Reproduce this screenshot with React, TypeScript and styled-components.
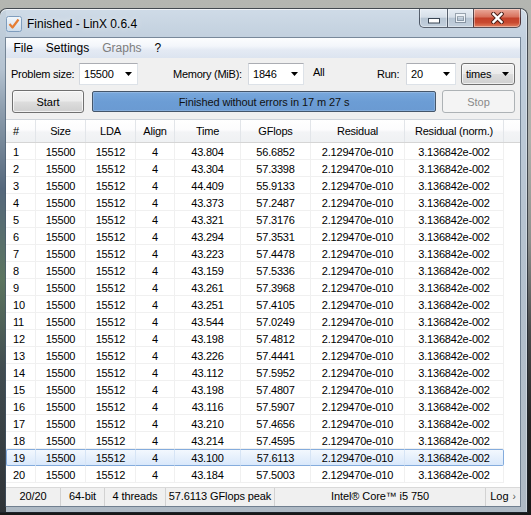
import React from "react";
import styled, { createGlobalStyle, css } from "styled-components";

const FONT = `"Liberation Sans", Arial, sans-serif`;

const Global = createGlobalStyle`
  html, body { margin: 0; padding: 0; }
  body {
    width: 531px;
    height: 515px;
    overflow: hidden;
    background: linear-gradient(180deg, #b4b6b1 0px, #aeb0ab 140px, #8d8f8c 240px, #4a4b4b 330px, #262626 420px, #181818 515px);
    font-family: ${FONT};
  }
`;

const Desktop = styled.div`
  height: 515px;
  padding-top: 9px;
  box-sizing: border-box;
`;

const Window = styled.div`
  width: 527px;
  height: 503px;
  box-sizing: border-box;
  padding: 0 7px 6px 6px;
  display: flex;
  flex-direction: column;
  border-radius: 7px 7px 0 0;
  box-shadow: 0 0 0 1px rgba(30, 38, 48, 0.75), inset 0 1px 0 rgba(255, 255, 255, 0.7),
    inset -1px 0 0 rgba(255, 255, 255, 0.35);
  background:
    linear-gradient(180deg, #c6d3df 0px, #b4c2d0 60px, #8e9eae 100px, #55687c 180px, #5c755f 270px, #414c50 360px, #2f3337 503px) left top / 6px 100% no-repeat,
    linear-gradient(180deg, #cfdbe7 0px, #c2d0de 29px, #b7c4d1 200px, #aeb9c4 503px);
`;

const TitleBar = styled.div`
  height: 29px;
  margin: 0 -7px 0 -6px;
  display: flex;
  align-items: flex-start;
`;

const TitleGroup = styled.div`
  height: 29px;
  padding-left: 6px;
  display: flex;
  align-items: center;
  gap: 5px;
  flex: 1;
`;

const TitleText = styled.span`
  font-family: ${FONT};
  font-size: 12px;
  color: #000;
  text-shadow: 0 0 6px rgba(255, 255, 255, 0.9);
  padding-top: 1px;
`;

const Controls = styled.div`
  display: flex;
  height: 19px;
  margin-right: 6px;
`;

const glass = css`
  background: linear-gradient(180deg, #e6edf4 0%, #d6dfe8 45%, #b7c5d3 52%, #c3d0dd 100%);
`;
const red = css`
  background: linear-gradient(180deg, #eaab9c 0%, #d9745f 42%, #c4412a 52%, #c94a30 75%, #e2805f 100%);
`;

const CtrlButton = styled.div<{ $kind: "min" | "max" | "close" }>`
  height: 19px;
  box-sizing: border-box;
  display: flex;
  align-items: center;
  justify-content: center;
  border: 1px solid rgba(35, 45, 60, 0.72);
  border-top: none;
  box-shadow: inset 0 0 0 1px rgba(255, 255, 255, 0.4);
  width: ${(p) => (p.$kind === "close" ? 48 : p.$kind === "min" ? 29 : 27)}px;
  margin-left: ${(p) => (p.$kind === "min" ? 0 : -1)}px;
  border-radius: ${(p) => (p.$kind === "min" ? "0 0 0 5px" : p.$kind === "close" ? "0 0 5px 0" : "0")};
  ${(p) => (p.$kind === "close" ? red : glass)}
`;

const MinGlyph = styled.svg`
  margin-top: 5px;
`;

const Client = styled.div`
  flex: 1;
  display: flex;
  flex-direction: column;
  background: #f0f0f0;
  box-shadow: 0 0 0 1px rgba(70, 88, 108, 0.6);
  overflow: hidden;
  font-family: ${FONT};
  font-size: 11px;
  color: #000;
`;

const MenuBar = styled.div`
  height: 20px;
  display: flex;
  align-items: center;
  padding-left: 1px;
  background: linear-gradient(180deg, #fcfdfe 0%, #f3f6fb 40%, #e4eaf4 60%, #dce4f0 100%);
`;

const MenuItem = styled.span<{ $disabled?: boolean }>`
  font-size: 12px;
  padding: 0 6.5px;
  color: ${(p) => (p.$disabled ? "#7d7d7d" : "#000")};
`;

const Toolbar = styled.div`
  display: flex;
  flex-direction: column;
  gap: 5px;
  padding: 5px 5px 6px 5px;
`;

const ToolRow = styled.div<{ $pl?: number }>`
  display: flex;
  align-items: center;
  padding-left: ${(p) => p.$pl ?? 0}px;
`;

const Label = styled.span<{ $w: number; $ml?: number; $raise?: number }>`
  width: ${(p) => p.$w}px;
  margin-left: ${(p) => p.$ml ?? 0}px;
  padding-bottom: ${(p) => p.$raise ?? 0}px;
  letter-spacing: -0.25px;
  white-space: nowrap;
`;

const Combo = styled.div<{ $w: number; $ml?: number }>`
  width: ${(p) => p.$w}px;
  margin-left: ${(p) => p.$ml ?? 0}px;
  height: 22px;
  box-sizing: border-box;
  display: flex;
  align-items: center;
  padding: 0 5px 0 4px;
  background: #fff;
  border: 1px solid #dde2e8;
  border-top-color: #abadb3;
  border-left-color: #d5d9df;
`;

const ButtonCombo = styled(Combo)`
  height: 22px;
  border: 1px solid #707070;
  border-radius: 3px;
  background: linear-gradient(180deg, #f2f2f2 0%, #ebebeb 48%, #dddddd 52%, #cfcfcf 100%);
  box-shadow: inset 0 0 0 1px rgba(255, 255, 255, 0.65);
`;

const ComboText = styled.span`
  flex: 1;
  letter-spacing: -0.2px;
`;

const Button = styled.button<{ $w: number; $disabled?: boolean }>`
  width: ${(p) => p.$w}px;
  height: 23px;
  box-sizing: border-box;
  margin: 0;
  padding: 0;
  font-family: ${FONT};
  font-size: 11px;
  border-radius: 3px;
  ${(p) =>
    p.$disabled
      ? css`
          border: 1px solid #adb2b5;
          background: #f4f4f4;
          color: #8a8a8a;
        `
      : css`
          border: 1px solid #707070;
          background: linear-gradient(180deg, #f2f2f2 0%, #ebebeb 48%, #dddddd 52%, #cfcfcf 100%);
          box-shadow: inset 0 0 0 1px rgba(255, 255, 255, 0.7);
          color: #000;
        `}
`;

const Progress = styled.div`
  flex: 1;
  height: 21px;
  margin: 0 6px 0 8px;
  box-sizing: border-box;
  border: 1px solid #45566a;
  border-radius: 2px;
  background: linear-gradient(180deg, #79a8dc 0%, #6c9dd5 50%, #6a9ad2 100%);
  box-shadow: inset 0 0 0 1px rgba(255, 255, 255, 0.18);
  display: flex;
  align-items: center;
  justify-content: center;
  color: #111;
  letter-spacing: -0.1px;
`;

const Table = styled.div`
  flex: 1;
  background: #fff;
  border-top: 1px solid #cfd4da;
  display: flex;
  flex-direction: column;
  overflow: hidden;
`;

const HeaderRow = styled.div`
  display: grid;
  grid-template-columns: 30px 50px 50px 39px 66px 70px 94px 99px 16px;
  height: 23px;
  box-sizing: border-box;
  border-bottom: 1px solid #d5d5d5;
  background: linear-gradient(180deg, #ffffff 0%, #fcfcfd 45%, #f3f4f6 55%, #eff1f3 100%);
`;

const HeaderCell = styled.div<{ $left?: boolean; $last?: boolean }>`
  display: flex;
  align-items: center;
  justify-content: ${(p) => (p.$left ? "flex-start" : "center")};
  padding-left: ${(p) => (p.$left ? 7 : 0)}px;
  border-right: ${(p) => (p.$last ? "none" : "1px solid #e2e5e9")};
  letter-spacing: -0.2px;
`;

const DataRow = styled.div`
  display: grid;
  grid-template-columns: 30px 50px 50px 39px 66px 70px 94px 99px;
  height: 17px;
`;

const Cell = styled.div<{ $left?: boolean; $sel?: boolean; $first?: boolean; $last?: boolean }>`
  display: flex;
  align-items: center;
  box-sizing: border-box;
  padding-top: 2px;
  justify-content: ${(p) => (p.$left ? "flex-start" : "center")};
  padding-left: ${(p) => (p.$left ? 7 : 0)}px;
  border-right: 1px solid #f0f0f0;
  border-bottom: 1px solid #f0f0f0;
  letter-spacing: -0.2px;
  white-space: nowrap;
  ${(p) =>
    p.$sel &&
    css`
      background: linear-gradient(180deg, #f3f8fe 0%, #e6f0fc 50%, #d9e8fb 100%);
      border-top: 1px solid #84acdd;
      border-bottom: 1px solid #84acdd;
      border-right: 1px solid ${p.$last ? "#84acdd" : "#d6e4f5"};
      padding-top: 1px;
      ${p.$first &&
      css`
        border-left: 1px solid #84acdd;
        border-radius: 2px 0 0 2px;
        padding-left: 6px;
      `}
      ${p.$last &&
      css`
        border-radius: 0 2px 2px 0;
      `}
    `}
`;

const StatusBar = styled.div`
  height: 19px;
  box-sizing: border-box;
  display: flex;
  background: #f0f0f0;
  border-top: 1px solid #d9d9d9;
`;

const StatusCell = styled.div<{ $w?: number; $last?: boolean }>`
  width: ${(p) => (p.$w ? `${p.$w}px` : "auto")};
  flex: ${(p) => (p.$w ? "none" : 1)};
  display: flex;
  align-items: center;
  justify-content: center;
  padding-bottom: 2px;
  box-sizing: border-box;
  border-right: ${(p) => (p.$last ? "none" : "1px solid #d2d2d2")};
  white-space: nowrap;
  letter-spacing: -0.1px;
`;

const Chevron = styled.span`
  color: #555;
  margin-left: 4px;
  font-size: 10px;
`;

const Arrow = () => (
  <svg width="7" height="4" viewBox="0 0 7 4">
    <polygon points="0,0 7,0 3.5,4" fill="#000" />
  </svg>
);

const AppIcon = () => (
  <svg width="16" height="16" viewBox="0 0 16 16">
    <defs>
      <linearGradient id="ig" x1="0" y1="0" x2="0" y2="1">
        <stop offset="0" stopColor="#f4f8fc" />
        <stop offset="1" stopColor="#cddcea" />
      </linearGradient>
    </defs>
    <rect x="0.5" y="0.5" width="15" height="15" rx="2" fill="url(#ig)" stroke="#7f9dbd" />
    <path d="M3.5 8 L6.5 11.5 L12.5 3.5" stroke="#e57d33" strokeWidth="2.2" fill="none" strokeLinejoin="round" />
  </svg>
);

const data: [string, string][] = [
  ["43.804", "56.6852"],
  ["43.304", "57.3398"],
  ["44.409", "55.9133"],
  ["43.373", "57.2487"],
  ["43.321", "57.3176"],
  ["43.294", "57.3531"],
  ["43.223", "57.4478"],
  ["43.159", "57.5336"],
  ["43.261", "57.3968"],
  ["43.251", "57.4105"],
  ["43.544", "57.0249"],
  ["43.198", "57.4812"],
  ["43.226", "57.4441"],
  ["43.112", "57.5952"],
  ["43.198", "57.4807"],
  ["43.116", "57.5907"],
  ["43.210", "57.4656"],
  ["43.214", "57.4595"],
  ["43.100", "57.6113"],
  ["43.184", "57.5003"],
];

const headers = ["#", "Size", "LDA", "Align", "Time", "GFlops", "Residual", "Residual (norm.)", ""];

export default function App() {
  return (
    <>
      <Global />
      <Desktop>
        <Window>
          <TitleBar>
            <TitleGroup>
              <AppIcon />
              <TitleText>Finished - LinX 0.6.4</TitleText>
            </TitleGroup>
            <Controls>
              <CtrlButton $kind="min">
                <MinGlyph width="12" height="6" viewBox="0 0 12 6">
                  <rect x="0.5" y="0.5" width="11" height="4.5" fill="#fff" stroke="#3a4654" />
                </MinGlyph>
              </CtrlButton>
              <CtrlButton $kind="max">
                <svg width="11" height="10" viewBox="0 0 11 10">
                  <rect x="0.5" y="0.5" width="10" height="9" fill="none" stroke="rgba(70,85,100,0.45)" />
                  <rect x="1.5" y="1.5" width="8" height="7" fill="none" stroke="#eef3f8" strokeWidth="1" />
                  <rect x="1.5" y="1.5" width="8" height="2" fill="#eef3f8" />
                  <rect x="2.5" y="3.5" width="6" height="4" fill="none" stroke="rgba(70,85,100,0.4)" />
                </svg>
              </CtrlButton>
              <CtrlButton $kind="close">
                <svg width="13" height="12" viewBox="0 0 13 12">
                  <path d="M2.5 2 L10.5 10 M10.5 2 L2.5 10" stroke="#4d2119" strokeWidth="4.4" strokeLinecap="square" />
                  <path d="M2.5 2 L10.5 10 M10.5 2 L2.5 10" stroke="#fff" strokeWidth="2.4" strokeLinecap="square" />
                </svg>
              </CtrlButton>
            </Controls>
          </TitleBar>
          <Client>
            <MenuBar>
              <MenuItem>File</MenuItem>
              <MenuItem>Settings</MenuItem>
              <MenuItem $disabled>Graphs</MenuItem>
              <MenuItem>?</MenuItem>
            </MenuBar>
            <Toolbar>
              <ToolRow>
                <Label $w={68}>Problem size:</Label>
                <Combo $w={59}>
                  <ComboText>15500</ComboText>
                  <Arrow />
                </Combo>
                <Label $w={75} $ml={35}>
                  Memory (MiB):
                </Label>
                <Combo $w={56}>
                  <ComboText>1846</ComboText>
                  <Arrow />
                </Combo>
                <Label $w={64} $ml={9} $raise={4}>
                  All
                </Label>
                <Label $w={29}>Run:</Label>
                <Combo $w={50}>
                  <ComboText>20</ComboText>
                  <Arrow />
                </Combo>
                <ButtonCombo $w={54} $ml={5}>
                  <ComboText>times</ComboText>
                  <Arrow />
                </ButtonCombo>
              </ToolRow>
              <ToolRow $pl={1}>
                <Button $w={72}>Start</Button>
                <Progress>Finished without errors in 17 m 27 s</Progress>
                <Button $w={73} $disabled>
                  Stop
                </Button>
              </ToolRow>
            </Toolbar>
            <Table>
              <HeaderRow>
                {headers.map((h, i) => (
                  <HeaderCell key={i} $left={i === 0} $last={i === headers.length - 1}>
                    {h}
                  </HeaderCell>
                ))}
              </HeaderRow>
              {data.map(([time, gflops], i) => {
                const sel = i === 18;
                const vals = [String(i + 1), "15500", "15512", "4", time, gflops, "2.129470e-010", "3.136842e-002"];
                return (
                  <DataRow key={i}>
                    {vals.map((v, j) => (
                      <Cell key={j} $left={j === 0} $sel={sel} $first={j === 0} $last={j === vals.length - 1}>
                        {v}
                      </Cell>
                    ))}
                  </DataRow>
                );
              })}
            </Table>
            <StatusBar>
              <StatusCell $w={55}>20/20</StatusCell>
              <StatusCell $w={44}>64-bit</StatusCell>
              <StatusCell $w={61}>4 threads</StatusCell>
              <StatusCell $w={109}>57.6113 GFlops peak</StatusCell>
              <StatusCell>Intel® Core™ i5 750</StatusCell>
              <StatusCell $w={34} $last>
                Log<Chevron>›</Chevron>
              </StatusCell>
            </StatusBar>
          </Client>
        </Window>
      </Desktop>
    </>
  );
}
